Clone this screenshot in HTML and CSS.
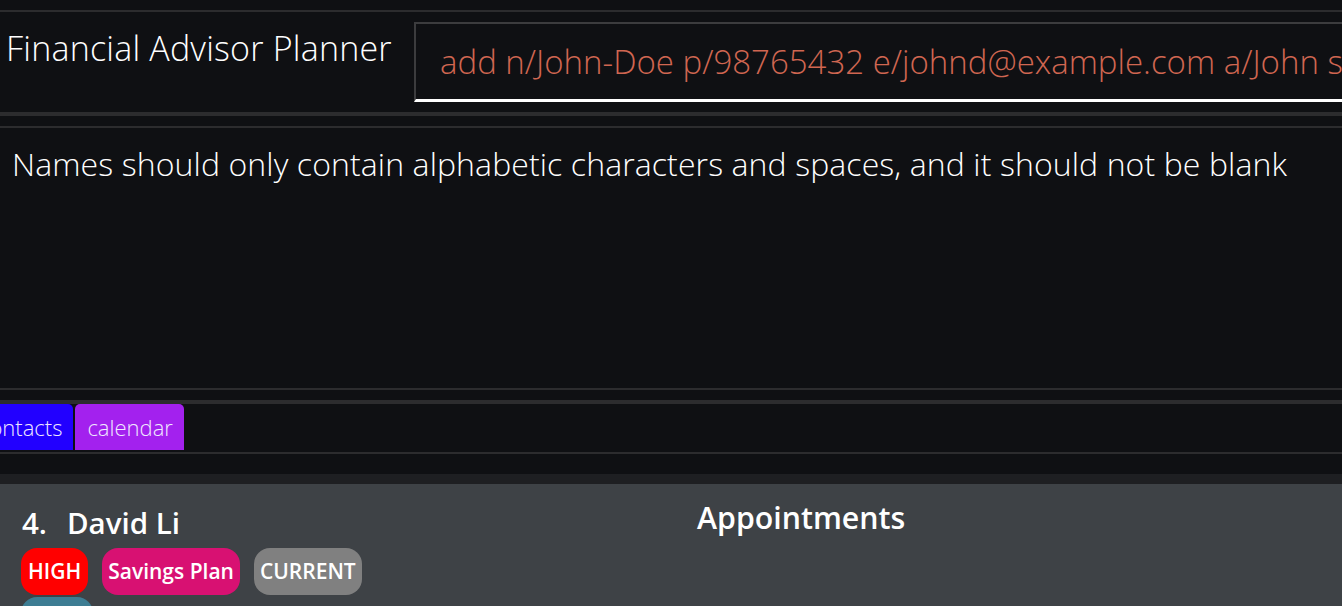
FILE: index.html
```html
<!DOCTYPE html>
<html>
<head>
<meta charset="utf-8">
<link rel="stylesheet" href="styles.css">
</head>
<body>
<div class="app">
  <header class="header">
    <div class="title">Financial Advisor Planner</div>
    <div class="command">add n/John-Doe p/98765432 e/johnd@example.com a/John s</div>
  </header>
  <section class="result">
    <p class="result-text">Names should only contain alphabetic characters and spaces, and it should not be blank</p>
  </section>
  <nav class="tabbar">
    <div class="tab tab-contacts">contacts</div>
    <div class="tab tab-calendar">calendar</div>
  </nav>
  <div class="spacer"></div>
  <div class="band"></div>
  <main class="panel">
    <div class="card">
      <div class="name"><span class="idx">4.</span>David Li</div>
      <div class="tags">
        <span class="tag tag-high">HIGH</span>
        <span class="tag tag-plan">Savings Plan</span>
        <span class="tag tag-current">CURRENT</span>
        <span class="tag tag-teal"></span>
      </div>
    </div>
    <div class="appointments">
      <div class="appt-title">Appointments</div>
    </div>
  </main>
</div>
</body>
</html>
```

FILE: styles.css
```css
* { box-sizing: border-box; }
html, body { margin: 0; padding: 0; }
body {
  background: #0f1013;
  width: 1342px;
  height: 606px;
  overflow: hidden;
  font-family: "Open Sans", "Noto Sans", sans-serif;
  color: #ffffff;
}
.app {
  display: flex;
  flex-direction: column;
  padding-top: 10px;
}
.header {
  display: flex;
  align-items: flex-start;
  height: 106px;
  border-top: 2px solid #2c2c2e;
  border-bottom: 4px solid #2c2c2e;
  overflow: hidden;
}
.title {
  font-weight: 300;
  font-size: 34px;
  letter-spacing: 0.2px;
  padding-left: 6px;
  padding-top: 13px;
  width: 414px;
  white-space: nowrap;
}
.command {
  flex: 1;
  margin-top: 10px;
  height: 80px;
  border-top: 2px solid #3c3c3e;
  border-left: 2px solid #3c3c3e;
  border-bottom: 3px solid #ffffff;
  color: #d06651;
  font-weight: 300;
  font-size: 33px;
  padding-left: 24px;
  padding-top: 15px;
  white-space: nowrap;
  overflow: hidden;
}
.result {
  margin-top: 10px;
  border-top: 2px solid #2c2c2e;
  border-bottom: 2px solid #2c2c2e;
  height: 264px;
}
.result-text {
  margin: 0;
  padding: 14px 0 0 12px;
  font-weight: 300;
  font-size: 32px;
  letter-spacing: 0.1px;
  white-space: nowrap;
}
.tabbar {
  margin-top: 10px;
  display: flex;
  gap: 2px;
  border-top: 4px solid #2c2c2e;
  border-bottom: 2px solid #2c2c2e;
  height: 54px;
  padding-bottom: 2px;
  margin-left: -33px;
}
.tab {
  height: 46px;
  border-radius: 5px 5px 0 0;
  font-weight: 300;
  font-size: 22px;
  display: flex;
  align-items: center;
  padding: 0 11px 0 12px;
  color: #f0e8ff;
}
.tab-contacts { background: #2200ff; }
.tab-calendar { background: #a321ee; }
.spacer { height: 20px; }
.band { height: 10px; background: #1e1f22; }
.panel {
  background: #3e4246;
  display: grid;
  grid-template-columns: 671px 1fr;
  height: 122px;
  overflow: hidden;
}
.card {
  padding: 19px 0 0 21px;
}
.name {
  font-weight: 600;
  font-size: 29.5px;
  line-height: 40px;
  padding-left: 1px;
}
.idx { margin-right: 20px; }
.tags {
  display: flex;
  flex-wrap: wrap;
  column-gap: 14px;
  row-gap: 2px;
  margin-top: 5px;
  width: 360px;
}
.tag {
  font-weight: 600;
  font-size: 21px;
  height: 47px;
  line-height: 47px;
  padding: 0 6px;
  border-radius: 16px;
  color: #ffffff;
}
.tag-high { background: #ff0000; padding: 0 7px; }
.tag-plan { background: #d81172; }
.tag-current { background: #808080; }
.tag-teal { background: #3d7d93; width: 72px; }
.appointments {
  padding: 13px 0 0 26px;
}
.appt-title {
  font-weight: 600;
  font-size: 30.3px;
  line-height: 42px;
}
```
